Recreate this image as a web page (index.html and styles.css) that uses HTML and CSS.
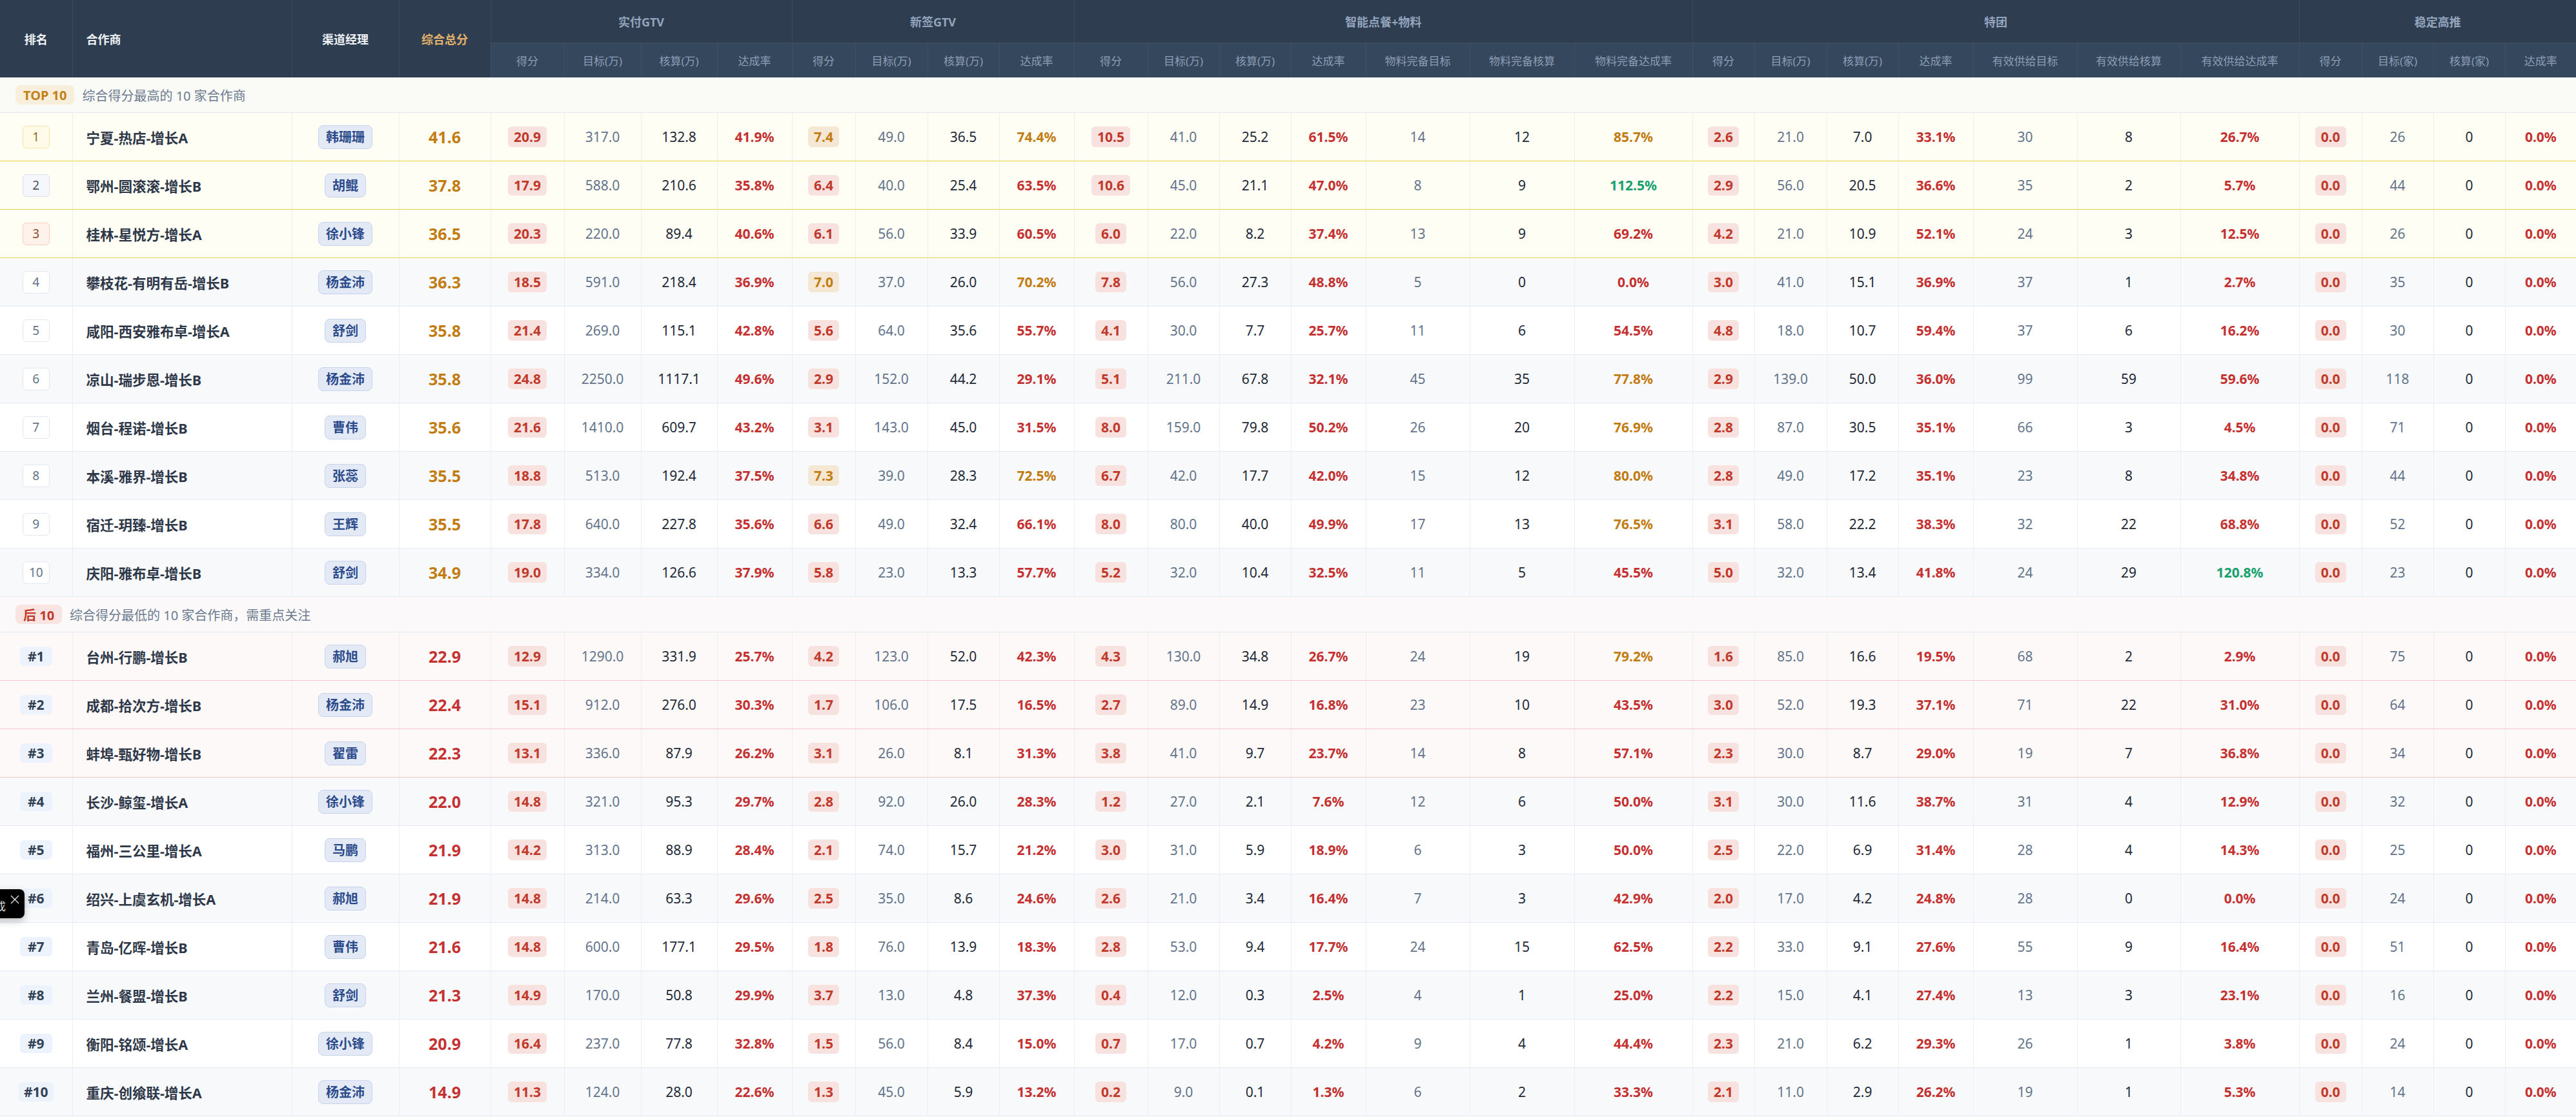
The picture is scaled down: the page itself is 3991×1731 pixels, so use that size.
FILE: index.html
```html
<!DOCTYPE html>
<html lang="zh-CN">
<head>
<meta charset="utf-8">
<title>合作商综合排名</title>
<link rel="stylesheet" href="styles.css">
</head>
<body>
<table class="rank-table">
<colgroup>
<col><col><col><col>
<col><col><col><col>
<col><col><col><col>
<col><col><col><col><col><col><col>
<col><col><col><col><col><col><col>
<col><col><col><col>
</colgroup>
<thead>
<tr class="h1">
<th rowspan="2" class="hm">排名</th>
<th rowspan="2" class="hm hl">合作商</th>
<th rowspan="2" class="hm">渠道经理</th>
<th rowspan="2" class="hm hs">综合总分</th>
<th colspan="4" class="hg">实付GTV</th>
<th colspan="4" class="hg">新签GTV</th>
<th colspan="7" class="hg">智能点餐+物料</th>
<th colspan="7" class="hg">特团</th>
<th colspan="4" class="hg">稳定高推</th>
</tr>
<tr class="h2">
<th>得分</th><th>目标(万)</th><th>核算(万)</th><th>达成率</th>
<th>得分</th><th>目标(万)</th><th>核算(万)</th><th>达成率</th>
<th>得分</th><th>目标(万)</th><th>核算(万)</th><th>达成率</th><th>物料完备目标</th><th>物料完备核算</th><th>物料完备达成率</th>
<th>得分</th><th>目标(万)</th><th>核算(万)</th><th>达成率</th><th>有效供给目标</th><th>有效供给核算</th><th>有效供给达成率</th>
<th>得分</th><th>目标(家)</th><th>核算(家)</th><th>达成率</th>
</tr>
</thead>
<tbody>
<tr class="banner top"><td colspan="30"><div class="banner-in"><span class="tag tag-top">TOP 10</span><span class="desc">综合得分最高的 10 家合作商</span></div></td></tr>

<tr class="y"><td><span class="rk k1">1</span></td><td class="nm">宁夏-热店-增长A</td><td><span class="mg">韩珊珊</span></td><td class="tot a">41.6</td><td><span class="p r">20.9</span></td><td class="t">317.0</td><td class="v">132.8</td><td class="rt r">41.9%</td><td><span class="p a">7.4</span></td><td class="t">49.0</td><td class="v">36.5</td><td class="rt a">74.4%</td><td><span class="p r">10.5</span></td><td class="t">41.0</td><td class="v">25.2</td><td class="rt r">61.5%</td><td class="t">14</td><td class="v">12</td><td class="rt a">85.7%</td><td><span class="p r">2.6</span></td><td class="t">21.0</td><td class="v">7.0</td><td class="rt r">33.1%</td><td class="t">30</td><td class="v">8</td><td class="rt r">26.7%</td><td><span class="p r">0.0</span></td><td class="t">26</td><td class="v">0</td><td class="rt r">0.0%</td></tr>
<tr class="y"><td><span class="rk k2">2</span></td><td class="nm">鄂州-圆滚滚-增长B</td><td><span class="mg">胡鲲</span></td><td class="tot a">37.8</td><td><span class="p r">17.9</span></td><td class="t">588.0</td><td class="v">210.6</td><td class="rt r">35.8%</td><td><span class="p r">6.4</span></td><td class="t">40.0</td><td class="v">25.4</td><td class="rt r">63.5%</td><td><span class="p r">10.6</span></td><td class="t">45.0</td><td class="v">21.1</td><td class="rt r">47.0%</td><td class="t">8</td><td class="v">9</td><td class="rt g">112.5%</td><td><span class="p r">2.9</span></td><td class="t">56.0</td><td class="v">20.5</td><td class="rt r">36.6%</td><td class="t">35</td><td class="v">2</td><td class="rt r">5.7%</td><td><span class="p r">0.0</span></td><td class="t">44</td><td class="v">0</td><td class="rt r">0.0%</td></tr>
<tr class="y"><td><span class="rk k3">3</span></td><td class="nm">桂林-星悦方-增长A</td><td><span class="mg">徐小锋</span></td><td class="tot a">36.5</td><td><span class="p r">20.3</span></td><td class="t">220.0</td><td class="v">89.4</td><td class="rt r">40.6%</td><td><span class="p r">6.1</span></td><td class="t">56.0</td><td class="v">33.9</td><td class="rt r">60.5%</td><td><span class="p r">6.0</span></td><td class="t">22.0</td><td class="v">8.2</td><td class="rt r">37.4%</td><td class="t">13</td><td class="v">9</td><td class="rt r">69.2%</td><td><span class="p r">4.2</span></td><td class="t">21.0</td><td class="v">10.9</td><td class="rt r">52.1%</td><td class="t">24</td><td class="v">3</td><td class="rt r">12.5%</td><td><span class="p r">0.0</span></td><td class="t">26</td><td class="v">0</td><td class="rt r">0.0%</td></tr>
<tr class="alt"><td><span class="rk">4</span></td><td class="nm">攀枝花-有明有岳-增长B</td><td><span class="mg">杨金沛</span></td><td class="tot a">36.3</td><td><span class="p r">18.5</span></td><td class="t">591.0</td><td class="v">218.4</td><td class="rt r">36.9%</td><td><span class="p a">7.0</span></td><td class="t">37.0</td><td class="v">26.0</td><td class="rt a">70.2%</td><td><span class="p r">7.8</span></td><td class="t">56.0</td><td class="v">27.3</td><td class="rt r">48.8%</td><td class="t">5</td><td class="v">0</td><td class="rt r">0.0%</td><td><span class="p r">3.0</span></td><td class="t">41.0</td><td class="v">15.1</td><td class="rt r">36.9%</td><td class="t">37</td><td class="v">1</td><td class="rt r">2.7%</td><td><span class="p r">0.0</span></td><td class="t">35</td><td class="v">0</td><td class="rt r">0.0%</td></tr>
<tr><td><span class="rk">5</span></td><td class="nm">咸阳-西安雅布卓-增长A</td><td><span class="mg">舒剑</span></td><td class="tot a">35.8</td><td><span class="p r">21.4</span></td><td class="t">269.0</td><td class="v">115.1</td><td class="rt r">42.8%</td><td><span class="p r">5.6</span></td><td class="t">64.0</td><td class="v">35.6</td><td class="rt r">55.7%</td><td><span class="p r">4.1</span></td><td class="t">30.0</td><td class="v">7.7</td><td class="rt r">25.7%</td><td class="t">11</td><td class="v">6</td><td class="rt r">54.5%</td><td><span class="p r">4.8</span></td><td class="t">18.0</td><td class="v">10.7</td><td class="rt r">59.4%</td><td class="t">37</td><td class="v">6</td><td class="rt r">16.2%</td><td><span class="p r">0.0</span></td><td class="t">30</td><td class="v">0</td><td class="rt r">0.0%</td></tr>
<tr class="alt"><td><span class="rk">6</span></td><td class="nm">凉山-瑞步恩-增长B</td><td><span class="mg">杨金沛</span></td><td class="tot a">35.8</td><td><span class="p r">24.8</span></td><td class="t">2250.0</td><td class="v">1117.1</td><td class="rt r">49.6%</td><td><span class="p r">2.9</span></td><td class="t">152.0</td><td class="v">44.2</td><td class="rt r">29.1%</td><td><span class="p r">5.1</span></td><td class="t">211.0</td><td class="v">67.8</td><td class="rt r">32.1%</td><td class="t">45</td><td class="v">35</td><td class="rt a">77.8%</td><td><span class="p r">2.9</span></td><td class="t">139.0</td><td class="v">50.0</td><td class="rt r">36.0%</td><td class="t">99</td><td class="v">59</td><td class="rt r">59.6%</td><td><span class="p r">0.0</span></td><td class="t">118</td><td class="v">0</td><td class="rt r">0.0%</td></tr>
<tr><td><span class="rk">7</span></td><td class="nm">烟台-程诺-增长B</td><td><span class="mg">曹伟</span></td><td class="tot a">35.6</td><td><span class="p r">21.6</span></td><td class="t">1410.0</td><td class="v">609.7</td><td class="rt r">43.2%</td><td><span class="p r">3.1</span></td><td class="t">143.0</td><td class="v">45.0</td><td class="rt r">31.5%</td><td><span class="p r">8.0</span></td><td class="t">159.0</td><td class="v">79.8</td><td class="rt r">50.2%</td><td class="t">26</td><td class="v">20</td><td class="rt a">76.9%</td><td><span class="p r">2.8</span></td><td class="t">87.0</td><td class="v">30.5</td><td class="rt r">35.1%</td><td class="t">66</td><td class="v">3</td><td class="rt r">4.5%</td><td><span class="p r">0.0</span></td><td class="t">71</td><td class="v">0</td><td class="rt r">0.0%</td></tr>
<tr class="alt"><td><span class="rk">8</span></td><td class="nm">本溪-雅界-增长B</td><td><span class="mg">张蕊</span></td><td class="tot a">35.5</td><td><span class="p r">18.8</span></td><td class="t">513.0</td><td class="v">192.4</td><td class="rt r">37.5%</td><td><span class="p a">7.3</span></td><td class="t">39.0</td><td class="v">28.3</td><td class="rt a">72.5%</td><td><span class="p r">6.7</span></td><td class="t">42.0</td><td class="v">17.7</td><td class="rt r">42.0%</td><td class="t">15</td><td class="v">12</td><td class="rt a">80.0%</td><td><span class="p r">2.8</span></td><td class="t">49.0</td><td class="v">17.2</td><td class="rt r">35.1%</td><td class="t">23</td><td class="v">8</td><td class="rt r">34.8%</td><td><span class="p r">0.0</span></td><td class="t">44</td><td class="v">0</td><td class="rt r">0.0%</td></tr>
<tr><td><span class="rk">9</span></td><td class="nm">宿迁-玥臻-增长B</td><td><span class="mg">王辉</span></td><td class="tot a">35.5</td><td><span class="p r">17.8</span></td><td class="t">640.0</td><td class="v">227.8</td><td class="rt r">35.6%</td><td><span class="p r">6.6</span></td><td class="t">49.0</td><td class="v">32.4</td><td class="rt r">66.1%</td><td><span class="p r">8.0</span></td><td class="t">80.0</td><td class="v">40.0</td><td class="rt r">49.9%</td><td class="t">17</td><td class="v">13</td><td class="rt a">76.5%</td><td><span class="p r">3.1</span></td><td class="t">58.0</td><td class="v">22.2</td><td class="rt r">38.3%</td><td class="t">32</td><td class="v">22</td><td class="rt r">68.8%</td><td><span class="p r">0.0</span></td><td class="t">52</td><td class="v">0</td><td class="rt r">0.0%</td></tr>
<tr class="alt"><td><span class="rk">10</span></td><td class="nm">庆阳-雅布卓-增长B</td><td><span class="mg">舒剑</span></td><td class="tot a">34.9</td><td><span class="p r">19.0</span></td><td class="t">334.0</td><td class="v">126.6</td><td class="rt r">37.9%</td><td><span class="p r">5.8</span></td><td class="t">23.0</td><td class="v">13.3</td><td class="rt r">57.7%</td><td><span class="p r">5.2</span></td><td class="t">32.0</td><td class="v">10.4</td><td class="rt r">32.5%</td><td class="t">11</td><td class="v">5</td><td class="rt r">45.5%</td><td><span class="p r">5.0</span></td><td class="t">32.0</td><td class="v">13.4</td><td class="rt r">41.8%</td><td class="t">24</td><td class="v">29</td><td class="rt g">120.8%</td><td><span class="p r">0.0</span></td><td class="t">23</td><td class="v">0</td><td class="rt r">0.0%</td></tr>

<tr class="banner bottom"><td colspan="30"><div class="banner-in"><span class="tag tag-bot">后 10</span><span class="desc">综合得分最低的 10 家合作商，需重点关注</span></div></td></tr>

<tr class="pk"><td><span class="rb">#1</span></td><td class="nm">台州-行鹏-增长B</td><td><span class="mg">郝旭</span></td><td class="tot r">22.9</td><td><span class="p r">12.9</span></td><td class="t">1290.0</td><td class="v">331.9</td><td class="rt r">25.7%</td><td><span class="p r">4.2</span></td><td class="t">123.0</td><td class="v">52.0</td><td class="rt r">42.3%</td><td><span class="p r">4.3</span></td><td class="t">130.0</td><td class="v">34.8</td><td class="rt r">26.7%</td><td class="t">24</td><td class="v">19</td><td class="rt a">79.2%</td><td><span class="p r">1.6</span></td><td class="t">85.0</td><td class="v">16.6</td><td class="rt r">19.5%</td><td class="t">68</td><td class="v">2</td><td class="rt r">2.9%</td><td><span class="p r">0.0</span></td><td class="t">75</td><td class="v">0</td><td class="rt r">0.0%</td></tr>
<tr class="pk"><td><span class="rb">#2</span></td><td class="nm">成都-拾次方-增长B</td><td><span class="mg">杨金沛</span></td><td class="tot r">22.4</td><td><span class="p r">15.1</span></td><td class="t">912.0</td><td class="v">276.0</td><td class="rt r">30.3%</td><td><span class="p r">1.7</span></td><td class="t">106.0</td><td class="v">17.5</td><td class="rt r">16.5%</td><td><span class="p r">2.7</span></td><td class="t">89.0</td><td class="v">14.9</td><td class="rt r">16.8%</td><td class="t">23</td><td class="v">10</td><td class="rt r">43.5%</td><td><span class="p r">3.0</span></td><td class="t">52.0</td><td class="v">19.3</td><td class="rt r">37.1%</td><td class="t">71</td><td class="v">22</td><td class="rt r">31.0%</td><td><span class="p r">0.0</span></td><td class="t">64</td><td class="v">0</td><td class="rt r">0.0%</td></tr>
<tr class="pk"><td><span class="rb">#3</span></td><td class="nm">蚌埠-甄好物-增长B</td><td><span class="mg">翟雷</span></td><td class="tot r">22.3</td><td><span class="p r">13.1</span></td><td class="t">336.0</td><td class="v">87.9</td><td class="rt r">26.2%</td><td><span class="p r">3.1</span></td><td class="t">26.0</td><td class="v">8.1</td><td class="rt r">31.3%</td><td><span class="p r">3.8</span></td><td class="t">41.0</td><td class="v">9.7</td><td class="rt r">23.7%</td><td class="t">14</td><td class="v">8</td><td class="rt r">57.1%</td><td><span class="p r">2.3</span></td><td class="t">30.0</td><td class="v">8.7</td><td class="rt r">29.0%</td><td class="t">19</td><td class="v">7</td><td class="rt r">36.8%</td><td><span class="p r">0.0</span></td><td class="t">34</td><td class="v">0</td><td class="rt r">0.0%</td></tr>
<tr class="alt"><td><span class="rb">#4</span></td><td class="nm">长沙-鲸玺-增长A</td><td><span class="mg">徐小锋</span></td><td class="tot r">22.0</td><td><span class="p r">14.8</span></td><td class="t">321.0</td><td class="v">95.3</td><td class="rt r">29.7%</td><td><span class="p r">2.8</span></td><td class="t">92.0</td><td class="v">26.0</td><td class="rt r">28.3%</td><td><span class="p r">1.2</span></td><td class="t">27.0</td><td class="v">2.1</td><td class="rt r">7.6%</td><td class="t">12</td><td class="v">6</td><td class="rt r">50.0%</td><td><span class="p r">3.1</span></td><td class="t">30.0</td><td class="v">11.6</td><td class="rt r">38.7%</td><td class="t">31</td><td class="v">4</td><td class="rt r">12.9%</td><td><span class="p r">0.0</span></td><td class="t">32</td><td class="v">0</td><td class="rt r">0.0%</td></tr>
<tr><td><span class="rb">#5</span></td><td class="nm">福州-三公里-增长A</td><td><span class="mg">马鹏</span></td><td class="tot r">21.9</td><td><span class="p r">14.2</span></td><td class="t">313.0</td><td class="v">88.9</td><td class="rt r">28.4%</td><td><span class="p r">2.1</span></td><td class="t">74.0</td><td class="v">15.7</td><td class="rt r">21.2%</td><td><span class="p r">3.0</span></td><td class="t">31.0</td><td class="v">5.9</td><td class="rt r">18.9%</td><td class="t">6</td><td class="v">3</td><td class="rt r">50.0%</td><td><span class="p r">2.5</span></td><td class="t">22.0</td><td class="v">6.9</td><td class="rt r">31.4%</td><td class="t">28</td><td class="v">4</td><td class="rt r">14.3%</td><td><span class="p r">0.0</span></td><td class="t">25</td><td class="v">0</td><td class="rt r">0.0%</td></tr>
<tr class="alt"><td><span class="rb">#6</span></td><td class="nm">绍兴-上虞玄机-增长A</td><td><span class="mg">郝旭</span></td><td class="tot r">21.9</td><td><span class="p r">14.8</span></td><td class="t">214.0</td><td class="v">63.3</td><td class="rt r">29.6%</td><td><span class="p r">2.5</span></td><td class="t">35.0</td><td class="v">8.6</td><td class="rt r">24.6%</td><td><span class="p r">2.6</span></td><td class="t">21.0</td><td class="v">3.4</td><td class="rt r">16.4%</td><td class="t">7</td><td class="v">3</td><td class="rt r">42.9%</td><td><span class="p r">2.0</span></td><td class="t">17.0</td><td class="v">4.2</td><td class="rt r">24.8%</td><td class="t">28</td><td class="v">0</td><td class="rt r">0.0%</td><td><span class="p r">0.0</span></td><td class="t">24</td><td class="v">0</td><td class="rt r">0.0%</td></tr>
<tr><td><span class="rb">#7</span></td><td class="nm">青岛-亿晖-增长B</td><td><span class="mg">曹伟</span></td><td class="tot r">21.6</td><td><span class="p r">14.8</span></td><td class="t">600.0</td><td class="v">177.1</td><td class="rt r">29.5%</td><td><span class="p r">1.8</span></td><td class="t">76.0</td><td class="v">13.9</td><td class="rt r">18.3%</td><td><span class="p r">2.8</span></td><td class="t">53.0</td><td class="v">9.4</td><td class="rt r">17.7%</td><td class="t">24</td><td class="v">15</td><td class="rt r">62.5%</td><td><span class="p r">2.2</span></td><td class="t">33.0</td><td class="v">9.1</td><td class="rt r">27.6%</td><td class="t">55</td><td class="v">9</td><td class="rt r">16.4%</td><td><span class="p r">0.0</span></td><td class="t">51</td><td class="v">0</td><td class="rt r">0.0%</td></tr>
<tr class="alt"><td><span class="rb">#8</span></td><td class="nm">兰州-餐盟-增长B</td><td><span class="mg">舒剑</span></td><td class="tot r">21.3</td><td><span class="p r">14.9</span></td><td class="t">170.0</td><td class="v">50.8</td><td class="rt r">29.9%</td><td><span class="p r">3.7</span></td><td class="t">13.0</td><td class="v">4.8</td><td class="rt r">37.3%</td><td><span class="p r">0.4</span></td><td class="t">12.0</td><td class="v">0.3</td><td class="rt r">2.5%</td><td class="t">4</td><td class="v">1</td><td class="rt r">25.0%</td><td><span class="p r">2.2</span></td><td class="t">15.0</td><td class="v">4.1</td><td class="rt r">27.4%</td><td class="t">13</td><td class="v">3</td><td class="rt r">23.1%</td><td><span class="p r">0.0</span></td><td class="t">16</td><td class="v">0</td><td class="rt r">0.0%</td></tr>
<tr><td><span class="rb">#9</span></td><td class="nm">衡阳-铭颂-增长A</td><td><span class="mg">徐小锋</span></td><td class="tot r">20.9</td><td><span class="p r">16.4</span></td><td class="t">237.0</td><td class="v">77.8</td><td class="rt r">32.8%</td><td><span class="p r">1.5</span></td><td class="t">56.0</td><td class="v">8.4</td><td class="rt r">15.0%</td><td><span class="p r">0.7</span></td><td class="t">17.0</td><td class="v">0.7</td><td class="rt r">4.2%</td><td class="t">9</td><td class="v">4</td><td class="rt r">44.4%</td><td><span class="p r">2.3</span></td><td class="t">21.0</td><td class="v">6.2</td><td class="rt r">29.3%</td><td class="t">26</td><td class="v">1</td><td class="rt r">3.8%</td><td><span class="p r">0.0</span></td><td class="t">24</td><td class="v">0</td><td class="rt r">0.0%</td></tr>
<tr class="alt"><td><span class="rb">#10</span></td><td class="nm">重庆-创飨联-增长A</td><td><span class="mg">杨金沛</span></td><td class="tot r">14.9</td><td><span class="p r">11.3</span></td><td class="t">124.0</td><td class="v">28.0</td><td class="rt r">22.6%</td><td><span class="p r">1.3</span></td><td class="t">45.0</td><td class="v">5.9</td><td class="rt r">13.2%</td><td><span class="p r">0.2</span></td><td class="t">9.0</td><td class="v">0.1</td><td class="rt r">1.3%</td><td class="t">6</td><td class="v">2</td><td class="rt r">33.3%</td><td><span class="p r">2.1</span></td><td class="t">11.0</td><td class="v">2.9</td><td class="rt r">26.2%</td><td class="t">19</td><td class="v">1</td><td class="rt r">5.3%</td><td><span class="p r">0.0</span></td><td class="t">14</td><td class="v">0</td><td class="rt r">0.0%</td></tr>
</tbody>
</table>

<div class="toast"><span class="toast-text">导出完成</span><svg class="toast-x" width="14" height="14" viewBox="0 0 14 14"><path d="M1 1 L13 13 M13 1 L1 13" stroke="#e5e5e5" stroke-width="1.4" fill="none"/></svg></div>
</body>
</html>
```

FILE: styles.css
```css
html, body {
  margin: 0;
  padding: 0;
  background: #ffffff;
}
body {
  position: relative;
  width: 3991px;
  overflow: hidden;
  font-family: "Noto Sans", "Noto Sans CJK SC", sans-serif;
  color: #334155;
}
.rank-table {
  width: 3991px;
  table-layout: fixed;
  border-collapse: collapse;
  border-spacing: 0;
}

/* column widths */
.rank-table col:nth-child(1) { width: 112px; }
.rank-table col:nth-child(2) { width: 340px; }
.rank-table col:nth-child(3) { width: 166px; }
.rank-table col:nth-child(4) { width: 142px; }
.rank-table col:nth-child(5) { width: 114px; }
.rank-table col:nth-child(6) { width: 119px; }
.rank-table col:nth-child(7) { width: 118px; }
.rank-table col:nth-child(8) { width: 116px; }
.rank-table col:nth-child(9) { width: 98px; }
.rank-table col:nth-child(10) { width: 112px; }
.rank-table col:nth-child(11) { width: 111px; }
.rank-table col:nth-child(12) { width: 116px; }
.rank-table col:nth-child(13) { width: 114px; }
.rank-table col:nth-child(14) { width: 111px; }
.rank-table col:nth-child(15) { width: 111px; }
.rank-table col:nth-child(16) { width: 116px; }
.rank-table col:nth-child(17) { width: 161px; }
.rank-table col:nth-child(18) { width: 162px; }
.rank-table col:nth-child(19) { width: 183px; }
.rank-table col:nth-child(20) { width: 96px; }
.rank-table col:nth-child(21) { width: 112px; }
.rank-table col:nth-child(22) { width: 111px; }
.rank-table col:nth-child(23) { width: 116px; }
.rank-table col:nth-child(24) { width: 161px; }
.rank-table col:nth-child(25) { width: 160px; }
.rank-table col:nth-child(26) { width: 184px; }
.rank-table col:nth-child(27) { width: 97px; }
.rank-table col:nth-child(28) { width: 111px; }
.rank-table col:nth-child(29) { width: 111px; }
.rank-table col:nth-child(30) { width: 110px; }

.rank-table th,
.rank-table td {
  padding: 0;
  text-align: center;
  vertical-align: middle;
  white-space: nowrap;
  overflow: hidden;
}

/* header */
.h1 th {
  height: 66px;
  background: #2e3d50;
  border-left: 1px solid #3b4b5f;
  border-bottom: 1px solid #405268;
}
.h1 th:first-child { border-left: none; }
.h2 th {
  height: 53px;
  background: #34475c;
  border-left: 1px solid #3f5167;
  font-size: 17px;
  font-weight: 400;
  color: #8c9db5;
}
.hm {
  font-size: 18px;
  font-weight: 700;
  color: #eef2f7;
  background: #2e3d50;
}
.h1 th.hm { border-bottom: none; }
.hl { text-align: left !important; padding-left: 21px !important; }
.hs { color: #e3b16a !important; }
.hg {
  font-size: 18px;
  font-weight: 700;
  color: #93a4bd;
}

/* banners */
.banner td {
  height: 54px;
  border-bottom: 1px solid #e3e7ee;
}
.banner.top td { background: #fafaf6; }
.banner.bottom td { background: #fbf9f9; }
.banner-in {
  display: flex;
  align-items: center;
  gap: 12px;
  padding-left: 24px;
}
.tag {
  display: inline-flex;
  align-items: center;
  height: 30px;
  padding: 0 12px;
  border-radius: 8px;
  font-size: 20px;
  font-weight: 700;
}
.tag-top { background: #f8eedc; color: #c47f17; }
.tag-bot { background: #fae4e1; color: #c0392b; }
.desc {
  font-size: 20px;
  color: #6b7a8f;
}

/* body rows */
tbody tr:not(.banner) td {
  height: 74px;
  border-bottom: 1px solid #e5e9f0;
  border-left: 1px solid #eceef2;
  font-size: 21px;
  background: #ffffff;
}
tbody tr:not(.banner) td:first-child { border-left: none; }
tbody tr.alt td { background: #f7f9fb; }
tbody tr.y td {
  background: #fffef5;
  border-bottom: 1px solid #e8d54c;
}
tbody tr.pk td {
  background: #fdf9f9;
  border-bottom: 1px solid #efc7c7;
}

.nm {
  text-align: left !important;
  padding-left: 21px !important;
  font-size: 21.5px !important;
  font-weight: 700;
  color: #2d3748;
}
.t { color: #64748b; }
.v { color: #1f2937; }
.rt { font-weight: 700; }
.rt.r { color: #c53030; }
.rt.a { color: #c27c12; }
.rt.g { color: #18a06e; }
.tot {
  font-size: 25px !important;
  font-weight: 700;
}
.tot.a { color: #c27c12; }
.tot.r { color: #c53030; }

.p {
  display: inline-block;
  padding: 0 9px;
  height: 32px;
  line-height: 32px;
  border-radius: 6px;
  font-weight: 700;
  font-size: 21px;
}
.p.r { background: #f8e2df; color: #c0392b; }
.p.a { background: #f4e7d4; color: #c27c12; }

.rk {
  display: inline-flex;
  align-items: center;
  justify-content: center;
  width: 40px;
  height: 33px;
  border: 1px solid #e2e8f0;
  border-radius: 6px;
  background: #ffffff;
  font-size: 19px;
  font-weight: 400;
  color: #64748b;
}
.rk.k1 { background: #fffbe8; border-color: #f7e4a2; color: #8a6b1a; }
.rk.k2 { background: #f5f7fc; border-color: #d7deec; color: #475569; }
.rk.k3 { background: #fff2ea; border-color: #f6cfbd; color: #8a4a2a; }

.rb {
  display: inline-flex;
  align-items: center;
  justify-content: center;
  min-width: 34px;
  height: 30px;
  padding: 0 8px;
  border-radius: 6px;
  background: #edf3fc;
  font-size: 21px;
  font-weight: 700;
  color: #334155;
}

.mg {
  display: inline-block;
  padding: 0 11px;
  height: 35px;
  line-height: 35px;
  border: 1px solid #c6d3ea;
  border-radius: 8px;
  background: #e4eaf5;
  font-size: 20px;
  font-weight: 700;
  color: #2b4a8b;
}

/* toast overlay */
.toast {
  position: absolute;
  top: 1378px;
  left: -100px;
  width: 138px;
  height: 45px;
  box-sizing: border-box;
  display: flex;
  align-items: center;
  justify-content: flex-end;
  gap: 7px;
  padding-right: 8px;
  background: #000000;
  border-radius: 8px;
  box-shadow: 0 4px 12px rgba(0, 0, 0, 0.25);
  color: #dcdcdc;
  font-size: 17px;
}
.toast-text { margin-top: 6px; }
.toast-x { align-self: flex-start; margin-top: 9px; }
```
